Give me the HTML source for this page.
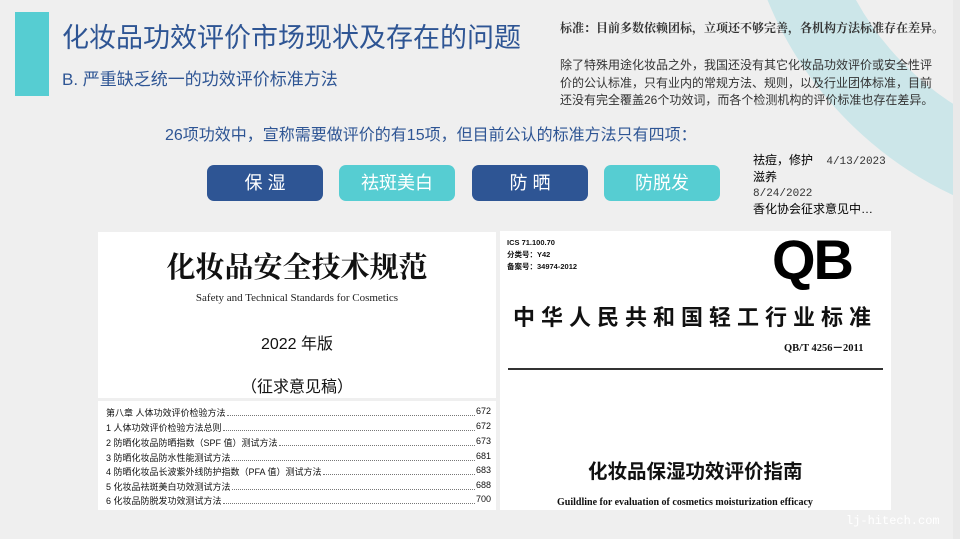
<!DOCTYPE html>
<html><head><meta charset="utf-8"><style>
*{margin:0;padding:0;box-sizing:border-box}
body{width:960px;height:539px;overflow:hidden;background:#efefef;position:relative;font-family:"Liberation Sans","Noto Sans CJK SC",sans-serif}
.a{position:absolute;white-space:nowrap}
.ring{position:absolute;left:740px;top:-510px;width:740px;height:740px;border-radius:50%;border:80px solid #cce6e9}
.btn{position:absolute;top:165px;height:36px;border-radius:7px;color:#fff;font-size:18px;text-align:center;line-height:36px}
.dk{background:#2e5594}.lt{background:#56cdd2}
.toc{position:absolute;left:106px;font-size:9px;color:#111;font-family:"Liberation Sans","Noto Sans CJK SC",sans-serif;width:385px;display:flex}
.toc span.d{flex:1;border-bottom:1px dotted #777;margin:0 1px 3px}
</style></head><body>
<div class="ring"></div>
<div class="a" style="left:953px;top:0;width:7px;height:539px;background:#e9e9e9"></div>
<div class="a" style="left:15px;top:12px;width:34px;height:84px;background:#56cdd2"></div>
<div class="a" style="left:62px;top:16px;font-size:27px;color:#2e5594">化妆品功效评价市场现状及存在的问题</div>
<div class="a" style="left:62px;top:65px;font-size:17px;color:#2e5594">B. 严重缺乏统一的功效评价标准方法</div>
<div class="a" style="left:560px;top:19px;font-size:12px;font-weight:bold;color:#333;font-family:'Liberation Serif','Noto Serif CJK SC',serif">标准：目前多数依赖团标，立项还不够完善，各机构方法标准存在差异。</div>
<div class="a" style="left:560px;top:57px;font-size:12px;color:#333;line-height:17.5px">除了特殊用途化妆品之外，我国还没有其它化妆品功效评价或安全性评<br>价的公认标准，只有业内的常规方法、规则，以及行业团体标准，目前<br>还没有完全覆盖26个功效词，而各个检测机构的评价标准也存在差异。</div>
<div class="a" style="left:165px;top:121px;font-size:16px;color:#2e5594">26项功效中，宣称需要做评价的有15项，但目前公认的标准方法只有四项：</div>
<div class="btn dk" style="left:207px;width:116px">保 湿</div>
<div class="btn lt" style="left:339px;width:116px">祛斑美白</div>
<div class="btn dk" style="left:472px;width:116px">防 晒</div>
<div class="btn lt" style="left:604px;width:116px">防脱发</div>
<div class="a" style="left:753px;top:153px;font-size:12px;color:#000;line-height:15px">祛痘，修护 <span style="font-family:'Liberation Mono',monospace;font-size:11px;color:#333;margin-left:10px">4/13/2023</span><br>滋养<br><span style="font-family:'Liberation Mono',monospace;font-size:11px;color:#333">8/24/2022</span><br>香化协会征求意见中…</div>
<div class="a" style="left:98px;top:232px;width:398px;height:166px;background:#fff"></div>
<div class="a" style="left:98px;top:245px;width:398px;text-align:center;font-size:29px;font-weight:bold;color:#111;font-family:'Liberation Serif','Noto Serif CJK SC',serif">化妆品安全技术规范</div>
<div class="a" style="left:98px;top:292px;width:398px;text-align:center;font-size:11px;color:#222;font-family:'Liberation Serif',serif">Safety and Technical Standards for Cosmetics</div>
<div class="a" style="left:98px;top:330px;width:398px;text-align:center;font-size:16px;color:#111">2022 年版</div>
<div class="a" style="left:98px;top:373px;width:398px;text-align:center;font-size:16px;color:#111">（征求意见稿）</div>
<div class="a" style="left:98px;top:401px;width:398px;height:109px;background:#fff"></div>
<div class="toc" style="top:406px">第八章 人体功效评价检验方法<span class="d"></span>672</div>
<div class="toc" style="top:421px">1 人体功效评价检验方法总则<span class="d"></span>672</div>
<div class="toc" style="top:436px">2 防晒化妆品防晒指数（SPF 值）测试方法<span class="d"></span>673</div>
<div class="toc" style="top:451px">3 防晒化妆品防水性能测试方法<span class="d"></span>681</div>
<div class="toc" style="top:465px">4 防晒化妆品长波紫外线防护指数（PFA 值）测试方法<span class="d"></span>683</div>
<div class="toc" style="top:480px">5 化妆品祛斑美白功效测试方法<span class="d"></span>688</div>
<div class="toc" style="top:494px">6 化妆品防脱发功效测试方法<span class="d"></span>700</div>
<div class="a" style="left:500px;top:231px;width:391px;height:279px;background:#fff"></div>
<div class="a" style="left:507px;top:237px;font-size:7.5px;font-weight:bold;color:#111;line-height:12px">ICS 71.100.70<br>分类号：Y42<br>备案号：34974-2012</div>
<div class="a" style="left:772px;top:232px;font-size:56px;line-height:1;font-weight:bold;color:#000;font-family:'Liberation Sans',sans-serif;letter-spacing:-2px">QB</div>
<div class="a" style="left:513px;top:300px;font-size:22px;color:#111;letter-spacing:6px;font-weight:bold">中华人民共和国轻工行业标准</div>
<div class="a" style="left:784px;top:340px;font-size:10.5px;font-weight:bold;color:#111;font-family:'Liberation Serif',serif">QB/T 4256－2011</div>
<div class="a" style="left:508px;top:368px;width:375px;height:2px;background:#333"></div>
<div class="a" style="left:588px;top:455px;font-size:19.5px;color:#111;font-weight:bold">化妆品保湿功效评价指南</div>
<div class="a" style="left:557px;top:497px;font-size:10px;font-weight:bold;color:#111;font-family:'Liberation Serif',serif">Guildline for evaluation of cosmetics moisturization efficacy</div>
<div class="a" style="left:846px;top:514px;font-size:12px;color:#fff;font-family:'Liberation Mono',monospace">lj-hitech.com</div>
</body></html>
